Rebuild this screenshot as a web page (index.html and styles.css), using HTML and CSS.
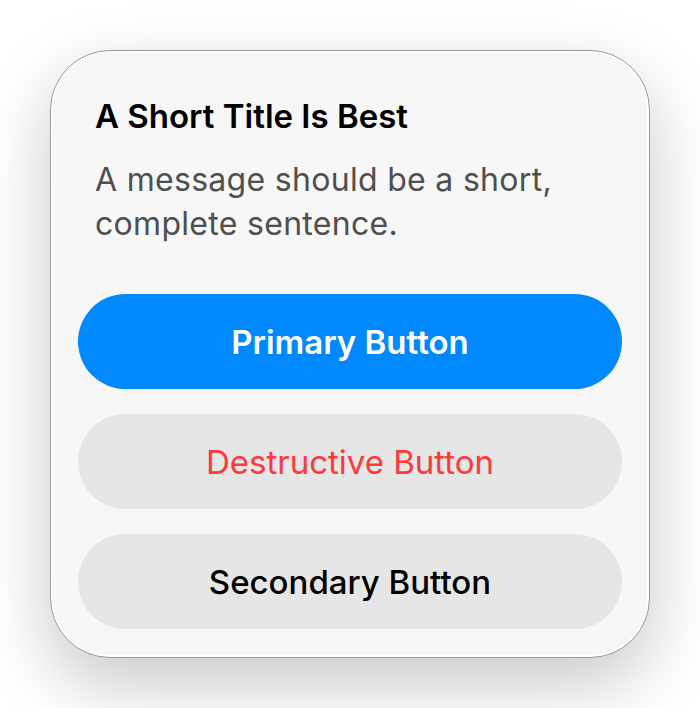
FILE: index.html
```html
<!DOCTYPE html>
<html lang="en">
<head>
    <meta charset="UTF-8">
    <meta name="viewport" content="width=device-width, initial-scale=1.0">
    <title>Alert</title>
    <link rel="stylesheet" href="styles.css">
</head>
<body>

    <div class="alert">
        <div class="alert-text">
            <h1 class="alert-title">A Short Title Is Best</h1>
            <p class="alert-message">A message should be a short, complete sentence.</p>
        </div>
        <div class="actions">
            <button class="action primary">Primary Button</button>
            <button class="action destructive">Destructive Button</button>
            <button class="action secondary">Secondary Button</button>
        </div>
    </div>

</body>
</html>
```

FILE: styles.css
```css
body {
    font-family: Inter, "Noto Sans", sans-serif;
    background-color: #fff;
    margin: 0;
    padding: 50px;
    min-height: 100vh;
    box-sizing: border-box;
}

.alert {
    width: 600px;
    box-sizing: border-box;
    background-color: #f7f7f7;
    border: 1px solid #9a9a9a;
    border-radius: 60px;
    padding: 45px 27px 28px;
    box-shadow: inset 0 0 0 2px rgba(255, 255, 255, 0.9),
                0 26px 70px rgba(0, 0, 0, 0.22);
}

.alert-text {
    padding: 0 17px;
}

.alert-title {
    margin: 0;
    font-size: 33px;
    line-height: 40px;
    font-weight: 600;
    color: #000;
}

.alert-message {
    margin: 22px 0 0;
    font-size: 32px;
    line-height: 44px;
    letter-spacing: 0.3px;
    font-weight: 400;
    color: #4f4f4f;
}

.actions {
    display: flex;
    flex-direction: column;
    gap: 25px;
    margin-top: 48px;
}

.action {
    height: 95px;
    border: none;
    border-radius: 48px;
    font-family: inherit;
    font-size: 33px;
    background-color: #e6e6e6;
    cursor: pointer;
}

.action.primary {
    background-color: #0088ff;
    color: #fff;
    font-weight: 600;
}

.action.destructive {
    color: #ff383c;
    font-weight: 400;
}

.action.secondary {
    color: #000;
    font-weight: 500;
}
```
